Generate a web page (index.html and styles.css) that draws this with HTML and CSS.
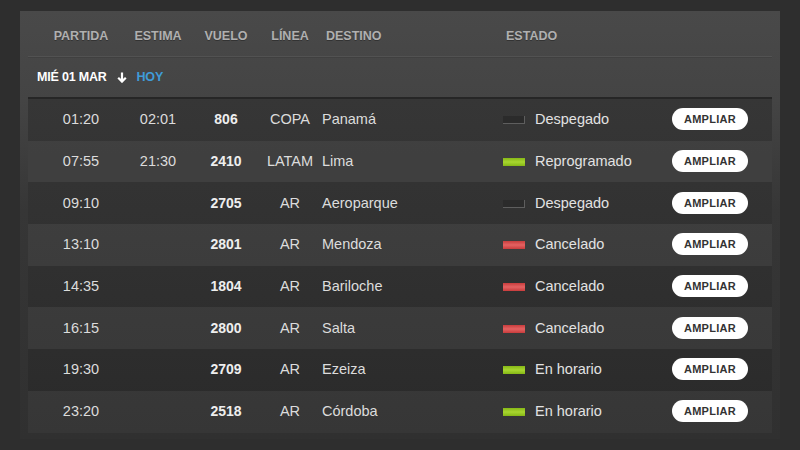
FILE: index.html
```html
<!DOCTYPE html>
<html lang="es">
<head>
<meta charset="utf-8">
<title>Partidas</title>
<link rel="stylesheet" href="styles.css">
</head>
<body>
<div class="panel">
  <div class="heads">
    <span class="c c1">PARTIDA</span>
    <span class="c c2">ESTIMA</span>
    <span class="c c3">VUELO</span>
    <span class="c c4">LÍNEA</span>
    <span class="hdest">DESTINO</span>
    <span class="hstate">ESTADO</span>
    <span></span>
  </div>
  <div class="dateline">
    <span class="date">MIÉ 01 MAR</span>
    <svg class="arrow" width="10" height="11" viewBox="0 0 10 11"><path d="M5 0.5V9.5M1.2 5.8L5 9.6L8.8 5.8" fill="none" stroke="#fff" stroke-width="2.2"/></svg>
    <span class="today">HOY</span>
  </div>
  <div class="rows">
    <div class="row"><span class="c c1">01:20</span><span class="c c2">02:01</span><span class="c c3 num">806</span><span class="c c4">COPA</span><span class="dest">Panamá</span><span class="state"><i class="led off"></i>Despegado</span><span class="btn">AMPLIAR</span></div>
    <div class="row"><span class="c c1">07:55</span><span class="c c2">21:30</span><span class="c c3 num">2410</span><span class="c c4">LATAM</span><span class="dest">Lima</span><span class="state"><i class="led ok"></i>Reprogramado</span><span class="btn">AMPLIAR</span></div>
    <div class="row"><span class="c c1">09:10</span><span class="c c2"></span><span class="c c3 num">2705</span><span class="c c4">AR</span><span class="dest">Aeroparque</span><span class="state"><i class="led off"></i>Despegado</span><span class="btn">AMPLIAR</span></div>
    <div class="row"><span class="c c1">13:10</span><span class="c c2"></span><span class="c c3 num">2801</span><span class="c c4">AR</span><span class="dest">Mendoza</span><span class="state"><i class="led bad"></i>Cancelado</span><span class="btn">AMPLIAR</span></div>
    <div class="row"><span class="c c1">14:35</span><span class="c c2"></span><span class="c c3 num">1804</span><span class="c c4">AR</span><span class="dest">Bariloche</span><span class="state"><i class="led bad"></i>Cancelado</span><span class="btn">AMPLIAR</span></div>
    <div class="row"><span class="c c1">16:15</span><span class="c c2"></span><span class="c c3 num">2800</span><span class="c c4">AR</span><span class="dest">Salta</span><span class="state"><i class="led bad"></i>Cancelado</span><span class="btn">AMPLIAR</span></div>
    <div class="row"><span class="c c1">19:30</span><span class="c c2"></span><span class="c c3 num">2709</span><span class="c c4">AR</span><span class="dest">Ezeiza</span><span class="state"><i class="led ok"></i>En horario</span><span class="btn">AMPLIAR</span></div>
    <div class="row"><span class="c c1">23:20</span><span class="c c2"></span><span class="c c3 num">2518</span><span class="c c4">AR</span><span class="dest">Córdoba</span><span class="state"><i class="led ok"></i>En horario</span><span class="btn">AMPLIAR</span></div>
  </div>
</div>
</body>
</html>
```
FILE: styles.css
```css
html, body {
  margin: 0;
  padding: 0;
  background: #2e2e2e;
  height: 450px;
  overflow: hidden;
}
body {
  font-family: "Liberation Sans", Arial, sans-serif;
  padding-top: 11px;
}
.panel {
  margin: 0 20px;
  padding: 0 8px 6px;
  background: linear-gradient(#494949 0, #444 90px, #363636 200px, #303030 100%);
}
.heads, .row {
  display: grid;
  grid-template-columns: 106px 48px 88px 40px 193px 169px 76px;
  align-items: center;
}
.heads {
  height: 46px;
  box-sizing: border-box;
  padding-top: 4px;
  border-bottom: 1px solid #525252;
  box-shadow: 0 1px 0 #404040;
  font-size: 12.5px;
  font-weight: bold;
  color: #b0b0b0;
  text-shadow: 0 1px 0 #333;
}
.c {
  display: flex;
  justify-content: center;
  white-space: nowrap;
}
.hdest { padding-left: 16px; }
.hstate { padding-left: 3px; }
.dateline {
  height: 40px;
  display: flex;
  align-items: center;
  padding-left: 9px;
  border-bottom: 2px solid #262626;
  box-shadow: 0 1px 0 #555;
  font-size: 12.5px;
  font-weight: bold;
  letter-spacing: -0.2px;
}
.date { color: #fff; }
.arrow { margin: 0 0 0 10px; }
.today { color: #3f9bd8; margin-left: 10px; }
.rows {
  background: linear-gradient(#363636, #2a2a2a);
}
.row {
  height: 41.7px;
  padding-bottom: 1px;
  box-sizing: border-box;
  font-size: 14.5px;
  color: #dcdcdc;
}
.row:nth-child(even) { background: rgba(255,255,255,0.06); }
.num { font-weight: bold; font-size: 14px; color: #eee; }
.dest { padding-left: 12px; }
.state { display: flex; align-items: center; color: #e2e2e2; }
.led {
  width: 22px;
  height: 8px;
  margin: 2px 10px 0 0;
  box-sizing: border-box;
}
.led.off {
  background: #2b2b2b;
  box-shadow: inset -1px -1px 0 #5e5e5e;
}
.led.ok { background: linear-gradient(#86b816, #a8d630 50%, #86b816); }
.led.bad { background: linear-gradient(#c83c3c, #e46262 50%, #c83c3c); }
.btn {
  height: 22px;
  border-radius: 11px;
  background: #fff;
  color: #333;
  font-size: 11px;
  font-weight: bold;
  letter-spacing: 0.3px;
  display: flex;
  align-items: center;
  justify-content: center;
}
```
